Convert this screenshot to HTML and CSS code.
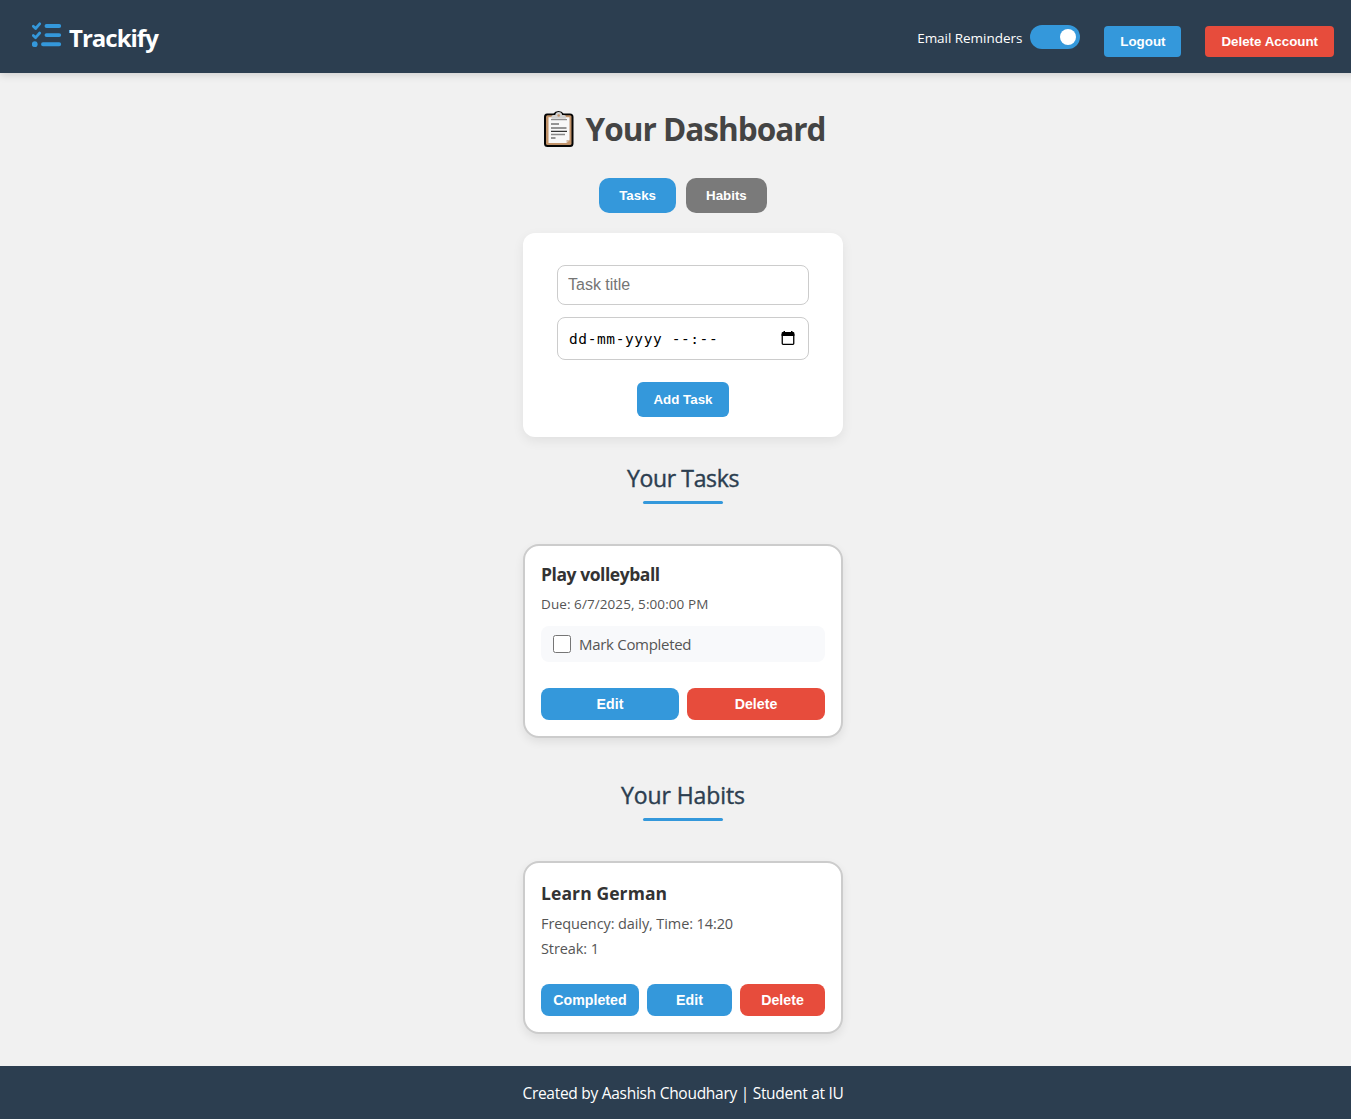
FILE: index.html
```html
<!DOCTYPE html>
<html lang="en">
<head>
<meta charset="utf-8">
<title>Trackify</title>
<link rel="stylesheet" href="styles.css">
</head>
<body>
<div class="page">
  <header class="navbar">
    <div class="brand">
      <svg class="brand-icon" viewBox="0 0 30 26" width="30" height="26" fill="none" stroke="#3498db" stroke-linecap="round" stroke-linejoin="round">
        <path d="M1.300 4.300 3.600 6.500 7.700 1.800M1.300 13.500 3.600 15.700 7.700 11" stroke-width="2.700"/>
        <path d="M14.500 4h12.700M14.500 13.100h12.700M11 22.200h16.200" stroke-width="3.900"/>
        <circle cx="2.700" cy="22.200" r="2.900" fill="#3498db" stroke="none"/>
      </svg>
      <span class="brand-name">Trackify</span>
    </div>
    <nav class="nav-actions">
      <div class="reminders"><span class="reminders-label">Email Reminders</span><span class="switch"></span></div>
      <button class="btn nav-btn">Logout</button>
      <button class="btn nav-btn danger">Delete Account</button>
    </nav>
  </header>

  <main class="dashboard">
    <h1 class="page-title">
      <svg class="clipboard" viewBox="0 0 32 38" width="32" height="38">
        <path d="M4 3.5h6.5Q12 1 15.5 1T20.500 3.500H27q3.500 0 3.500 3.500v26.500q0 3.500-3.500 3.500H4.500Q1 37 1 33.500V7q0-3.500 3-3.500z" fill="#050505"/>
        <rect x="3" y="5.200" width="25.500" height="29.800" rx="1.500" fill="#c1936a"/>
        <path d="M5.500 7.300H26.500V30L23.500 33H5.500z" fill="#f8f8f8"/>
        <path d="M23.500 33v-3h3z" fill="#d0b9a5"/>
        <path d="M8.500 8.800V6.500q0-1.500 2-1.500h1.700q.5-3 3.500-3t3.500 3h1.700q2 0 2 1.500v2.300z" fill="#d1d1d1"/>
        <circle cx="15.700" cy="5.500" r="1.300" fill="#c1936a"/>
        <path d="M8 9.700h16" stroke="#777" stroke-width="1"/>
        <path d="M8 14h8M8 18h15.500M8 21.300h16M8 28h4.500" stroke="#333" stroke-width="1.200"/>
        <path d="M8 24.500h14" stroke="#888" stroke-width="1.500"/>
      </svg>
      <span>Your Dashboard</span>
    </h1>
    <div class="tabs">
      <button class="btn tab">Tasks</button>
      <button class="btn tab inactive">Habits</button>
    </div>

    <form class="task-form">
      <input class="field" type="text" placeholder="Task title">
      <div class="field date-field">
        <span>dd-mm-yyyy --:--</span>
        <svg width="14" height="15" viewBox="0 0 14 15"><path d="M1.250 3v9.500q0 .8.800.8h9.900q.8 0 .8-.8V3" fill="none" stroke="#000" stroke-width="1.300"/><path d="M.6 5V2.200Q.6 1 1.800 1H2.500V0H4v1h6V0h1.500v1h.7q1.200 0 1.200 1.200V5z"/></svg>
      </div>
      <button class="btn add-btn" type="button">Add Task</button>
    </form>

    <h2 class="section-title tasks-title">Your Tasks</h2>
    <article class="card task-card">
      <h3 class="card-title">Play volleyball</h3>
      <p class="due">Due: 6/7/2025, 5:00:00 PM</p>
      <label class="complete"><input class="check" type="checkbox"><span>Mark Completed</span></label>
      <div class="actions"><button class="btn">Edit</button><button class="btn danger">Delete</button></div>
    </article>

    <h2 class="section-title habits-title">Your Habits</h2>
    <article class="card habit-card">
      <h3 class="card-title habit-name">Learn German</h3>
      <p class="detail">Frequency: daily, Time: 14:20</p>
      <p class="detail streak">Streak: 1</p>
      <div class="actions"><button class="btn done">Completed</button><button class="btn">Edit</button><button class="btn danger">Delete</button></div>
    </article>
  </main>
  <footer class="footer"><span>Created by Aashish Choudhary | Student at IU</span></footer>
</div>
</body>
</html>
```
FILE: styles.css
```css
* { box-sizing: border-box; }
html { overflow: hidden; }
body {
  margin: 0;
  background: #f1f1f1;
  color: #333;
  font-family: "Segoe UI", "Open Sans", sans-serif;
}
h1, h2, h3, p { margin: 0; }

.page {
  width: 1366px;
  height: 1119px;
  display: flex;
  flex-direction: column;
}

.btn {
  border: 0;
  padding: 0;
  color: #fff;
  background: #3498db;
  font: bold 13.33px "Liberation Sans", Arial, sans-serif;
}
.btn.danger { background: #e74c3c; }

.navbar {
  height: 73px;
  flex: none;
  display: flex;
  justify-content: space-between;
  align-items: flex-start;
  padding: 22px 32px 0;
  background: #2c3e50;
  box-shadow: 0 2px 8px rgba(0, 0, 0, 0.15);
}
.brand { display: flex; gap: 7px; }
.brand-name {
  color: #fff;
  font-size: 24px;
  font-weight: 700;
  line-height: 32px;
  letter-spacing: -1px;
}
.nav-actions { display: flex; gap: 24px; padding-top: 3px; }
.reminders { display: flex; gap: 8px; }
.reminders-label {
  color: #fff;
  font-size: 13.5px;
  line-height: 27px;
  letter-spacing: -0.04px;
}
.switch {
  width: 50px;
  height: 24px;
  padding: 4px;
  border-radius: 12px;
  background: #3498db;
}
.switch::before {
  content: "";
  display: block;
  width: 16px;
  height: 16px;
  margin-left: auto;
  border-radius: 50%;
  background: #fff;
}
.nav-btn { height: 31px; margin-top: 1px; padding: 0 16px; border-radius: 4px; }

.dashboard {
  flex: 1;
  display: flex;
  flex-direction: column;
  align-items: center;
}
.page-title {
  display: flex;
  gap: 11px;
  width: 281px;
  margin-top: 37px;
  color: #444;
  font-size: 31.5px;
  line-height: 37px;
  white-space: nowrap;
  letter-spacing: -0.98px;
}
.clipboard { flex: none; }
.tabs { display: flex; gap: 10px; margin-top: 30px; }
.tab { height: 35px; padding: 0 20px; border-radius: 10px; }
.tab.inactive { background: #7a7a7a; }

.task-form {
  width: 320px;
  height: 204px;
  margin-top: 20px;
  padding: 32px 34px 20px;
  display: flex;
  flex-direction: column;
  align-items: center;
  border-radius: 12px;
  background: #fff;
  box-shadow: 0 4px 12px rgba(0, 0, 0, 0.07);
}
.field {
  width: 252px;
  height: 40px;
  padding: 0 10px;
  border: 1px solid #ccc;
  border-radius: 8px;
  background: #fff;
  font: 16px "Liberation Sans", Arial, sans-serif;
}
.field::placeholder { color: #757575; }
.date-field {
  height: 43px;
  margin-top: 12px;
  padding: 0 13px 0 11px;
  display: flex;
  align-items: center;
  justify-content: space-between;
  color: #000;
  font: 14.5px "DejaVu Sans Mono", monospace;
  letter-spacing: 0.6px;
}
.add-btn { width: 92px; height: 35px; margin-top: 22px; border-radius: 6px; }

.section-title {
  color: #2c3e50;
  font-size: 23px;
  font-weight: 500;
  line-height: 30px;
  letter-spacing: -0.1px;
  white-space: nowrap;
  -webkit-text-stroke: 0.4px #2c3e50;
}
.section-title::after {
  content: "";
  display: block;
  width: 80px;
  height: 3px;
  margin: 8px auto 0;
  border-radius: 2px;
  background: #3498db;
}
.tasks-title { margin-top: 26px; letter-spacing: -0.35px; }
.habits-title { margin-top: 42px; }

.card {
  width: 320px;
  margin-top: 40px;
  padding: 16px;
  border: 2px solid #ccc;
  border-radius: 16px;
  background: #fff;
  box-shadow: 0 4px 10px rgba(0, 0, 0, 0.08);
  display: flex;
  flex-direction: column;
  white-space: nowrap;
}
.task-card { height: 194px; }
.habit-card { height: 173px; }
.card-title { font-size: 17.5px; line-height: 24px; letter-spacing: -0.45px; }
.habit-name { margin-top: 2px; letter-spacing: 0.1px; }
.due { margin-top: 8px; color: #555; font-size: 13.5px; line-height: 20px; letter-spacing: 0.08px; }
.complete {
  height: 36px;
  margin-top: 12px;
  padding: 0 12px;
  display: flex;
  align-items: center;
  gap: 8px;
  border-radius: 8px;
  background: #f8f9fb;
  color: #555;
  font-size: 15px;
  letter-spacing: -0.3px;
}
.check {
  appearance: none;
  width: 18px;
  height: 18px;
  margin: 0;
  border: 1px solid #767676;
  border-radius: 2.5px;
  background: #fff;
}
.detail { margin-top: 8px; color: #555; font-size: 14.5px; line-height: 22px; letter-spacing: -0.1px; }
.detail.streak { margin-top: 3px; }
.actions { display: flex; gap: 8px; margin-top: auto; }
.actions .btn { flex: 1; height: 32px; border-radius: 8px; font-size: 14.2px; }
.actions .done { flex: 0 0 98px; }

.footer {
  height: 53px;
  flex: none;
  display: flex;
  align-items: center;
  justify-content: center;
  background: #2c3e50;
  color: #fff;
  font-size: 15.5px;
  white-space: nowrap;
  letter-spacing: -0.28px;
}
```
